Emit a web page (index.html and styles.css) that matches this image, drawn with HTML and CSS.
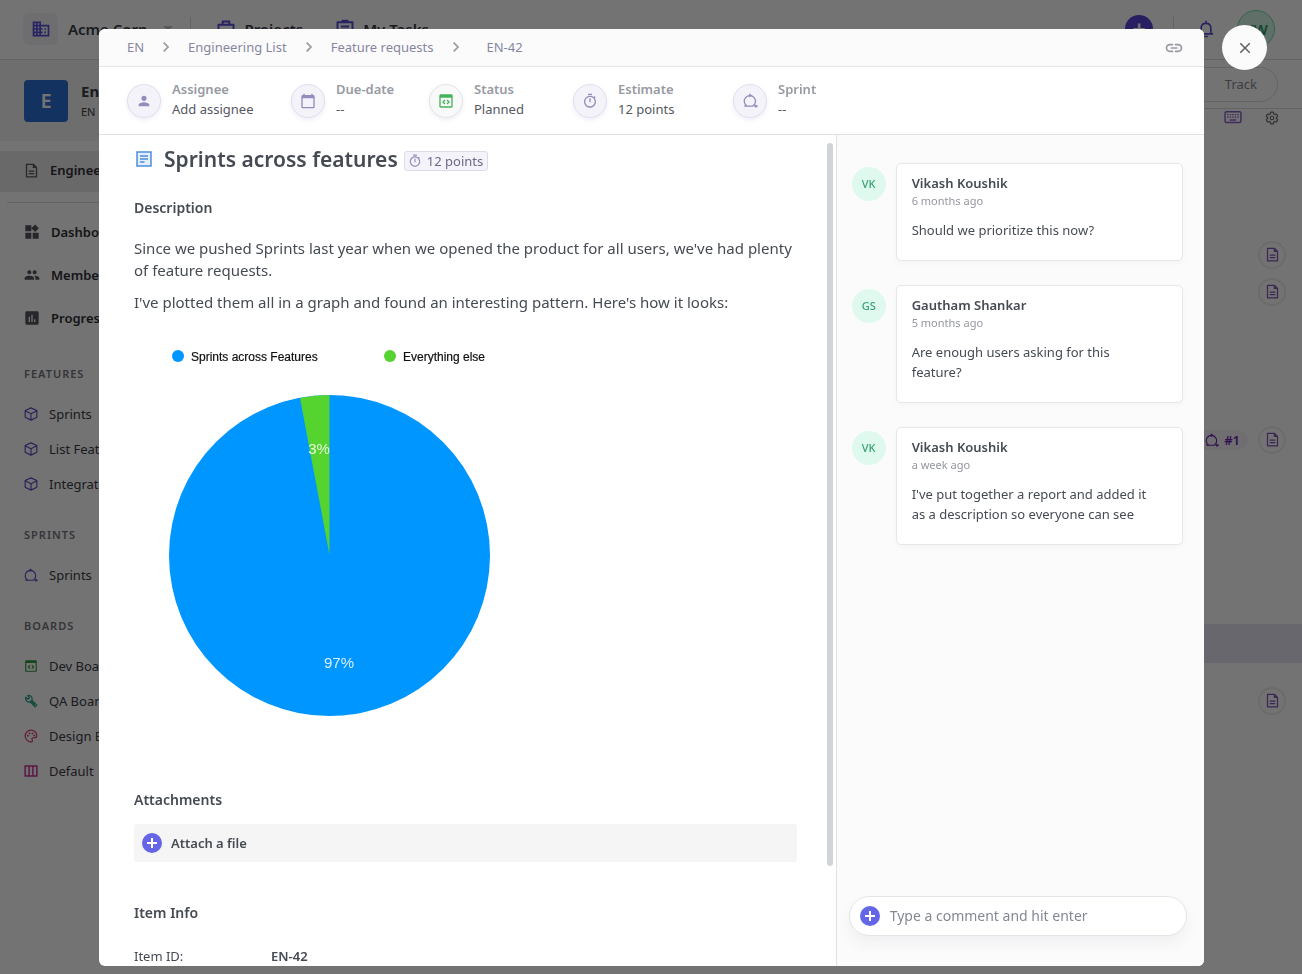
FILE: index.html
```html
<!DOCTYPE html>
<html lang="en">
<head>
<meta charset="utf-8">
<meta name="viewport" content="width=device-width, initial-scale=1">
<title>Sprints across features</title>
<link rel="stylesheet" href="styles.css">
</head>
<body>
<svg class="sprite" aria-hidden="true">
  <symbol id="i-building" viewBox="0 0 24 24"><path d="M12 7V3H2v18h20V7H12zM6 19H4v-2h2v2zm0-4H4v-2h2v2zm0-4H4V9h2v2zm0-4H4V5h2v2zm4 12H8v-2h2v2zm0-4H8v-2h2v2zm0-4H8V9h2v2zm0-4H8V5h2v2zm10 12h-8v-2h2v-2h-2v-2h2v-2h-2V9h8v10zm-2-8h-2v2h2v-2zm0 4h-2v2h2v-2z"/></symbol>
  <symbol id="i-person" viewBox="0 0 24 24"><path d="M12 12c2.21 0 4-1.79 4-4s-1.79-4-4-4-4 1.79-4 4 1.79 4 4 4zm0 2c-2.67 0-8 1.34-8 4v2h16v-2c0-2.66-5.33-4-8-4z"/></symbol>
  <symbol id="i-calendar" viewBox="0 0 24 24"><path d="M20 3h-1V1h-2v2H7V1H5v2H4c-1.1 0-2 .9-2 2v16c0 1.1.9 2 2 2h16c1.1 0 2-.9 2-2V5c0-1.1-.9-2-2-2zm0 18H4V8h16v13z"/></symbol>
  <symbol id="i-timer" viewBox="0 0 24 24"><path d="M15 1H9v2h6V1zm-4 13h2V8h-2v6zm8.03-6.61l1.42-1.42c-.43-.51-.9-.99-1.41-1.41l-1.42 1.42C16.07 4.74 14.12 4 12 4c-4.97 0-9 4.03-9 9s4.02 9 9 9 9-4.03 9-9c0-2.12-.74-4.07-1.97-5.61zM12 20c-3.87 0-7-3.13-7-7s3.13-7 7-7 7 3.13 7 7-3.13 7-7 7z"/></symbol>
  <symbol id="i-code" viewBox="0 0 24 24"><path fill-rule="evenodd" d="M4 2h16a2 2 0 0 1 2 2v16a2 2 0 0 1-2 2H4a2 2 0 0 1-2-2V4a2 2 0 0 1 2-2zm0 5v13h16V7z"/><path fill="none" stroke="currentColor" stroke-width="2" d="M10.500 10.500l-3 3 3 3M13.500 10.500l3 3-3 3"/></symbol>
  <symbol id="i-sprint" viewBox="0 0 24 24"><path fill="none" stroke="currentColor" stroke-width="2" d="M2 21h14M6.500 21a9 9 0 1 1 9 0M18 21h5"/><path d="M10 .5l4.500 3.500-4.500 3zM19.500 18l4.500 3-4.500 3z"/></symbol>
  <symbol id="i-link" viewBox="0 0 24 24"><path d="M3.900 12c0-1.710 1.390-3.100 3.100-3.100h4V7H7c-2.760 0-5 2.240-5 5s2.240 5 5 5h4v-1.900H7c-1.710 0-3.100-1.390-3.100-3.100zM8 13h8v-2H8v2zm9-6h-4v1.900h4c1.710 0 3.100 1.390 3.100 3.100s-1.390 3.100-3.100 3.100h-4V17h4c2.760 0 5-2.240 5-5s-2.240-5-5-5z"/></symbol>
  <symbol id="i-chevron" viewBox="0 0 24 24"><path fill="none" stroke="currentColor" stroke-width="2.600" d="M8.500 5.500l6.500 6.500-6.500 6.500"/></symbol>
  <symbol id="i-close" viewBox="0 0 24 24"><path d="M19 6.410L17.590 5 12 10.590 6.410 5 5 6.410 10.590 12 5 17.590 6.410 19 12 13.410 17.590 19 19 17.590 13.410 12z"/></symbol>
  <symbol id="i-plus" viewBox="0 0 20 20"><circle cx="10" cy="10" r="10"/><path stroke="#fff" stroke-width="2" d="M10 5v10M5 10h10"/></symbol>
  <symbol id="i-doc" viewBox="0 0 24 24"><path fill="none" stroke="currentColor" stroke-width="2" stroke-linejoin="round" d="M4 2h11l5 5v15H4z"/><path d="M14 2v6h6zM7.500 12h9v1.800h-9zM7.500 16h9v1.800h-9z"/></symbol>
  <symbol id="i-article" viewBox="0 0 16 16"><rect x="1" y="1" width="14" height="14" fill="#e3effc" stroke="currentColor" stroke-width="1.500"/><path stroke="currentColor" stroke-width="1.400" d="M4 5h8M4 8h8M4 11h4.500"/></symbol>
  <symbol id="i-widgets" viewBox="0 0 24 24"><path d="M13 13v9h9v-9h-9zM2 22h9v-9H2v9zM2 2v9h9V2H2zm14.660-1.310L11 6.340 16.660 12l5.660-5.660-5.660-5.650z"/></symbol>
  <symbol id="i-people" viewBox="0 0 24 24"><path d="M16 11c1.660 0 2.990-1.340 2.990-3S17.660 5 16 5c-1.660 0-3 1.340-3 3s1.340 3 3 3zm-8 0c1.660 0 2.990-1.340 2.990-3S9.660 5 8 5C6.340 5 5 6.340 5 8s1.340 3 3 3zm0 2c-2.330 0-7 1.170-7 3.500V19h14v-2.500c0-2.330-4.670-3.500-7-3.500zm8 0c-.29 0-.62.02-.97.05 1.160.84 1.970 1.970 1.970 3.450V19h6v-2.500c0-2.330-4.670-3.500-7-3.500z"/></symbol>
  <symbol id="i-chart" viewBox="0 0 24 24"><path d="M20 2H4c-1.100 0-2 .9-2 2v16c0 1.100.9 2 2 2h16c1.100 0 2-.9 2-2V4c0-1.100-.9-2-2-2zM9 18H7v-8h2v8zm4 0h-2V7h2v11zm4 0h-2v-4h2v4z"/></symbol>
  <symbol id="i-cube" viewBox="0 0 24 24"><path fill="none" stroke="currentColor" stroke-width="2" stroke-linejoin="round" d="M12 1.500l10 4.500v11.500l-10 5-10-5V6zM2 6.500l10 5 10-5M12 11.500V22"/></symbol>
  <symbol id="i-wrench" viewBox="0 0 24 24"><path fill="none" stroke="currentColor" stroke-width="2" stroke-linejoin="round" d="M3 5.500l3.500 3.500 3-3L6 2.500c3-1.200 8 .5 8 5.500 0 1-.2 2-.5 2.500l8.500 8.500-3 3-8.500-8.500c-5 1.500-9.500-3-7.500-8zM11 11l7.500 7.500"/></symbol>
  <symbol id="i-palette" viewBox="0 0 24 24"><path fill="none" stroke="currentColor" stroke-width="2" d="M12 2a10 10 0 0 0 0 20c2.500 0 3-1.800 2-3.500-1-1.800 0-3.500 2-3.500h2c2.500 0 4-1.500 4-4 0-5-4.500-9-10-9z"/><circle cx="6.500" cy="11.500" r="1.600"/><circle cx="9.500" cy="7.500" r="1.600"/><circle cx="14.500" cy="7.500" r="1.600"/><circle cx="17.500" cy="11" r="1.600"/></symbol>
  <symbol id="i-columns" viewBox="0 0 24 24"><path fill="none" stroke="currentColor" stroke-width="2.600" d="M2 3.500h20v17H2zM8.700 3v18M15.300 3v18"/></symbol>
  <symbol id="i-case" viewBox="0 0 24 24"><path fill="none" stroke="currentColor" stroke-width="2.400" stroke-linejoin="round" d="M3 7h18v14H3zM8 7V3h8v4"/></symbol>
  <symbol id="i-tasks" viewBox="0 0 24 24"><path fill="none" stroke="currentColor" stroke-width="2.400" stroke-linejoin="round" d="M3 4h18v17H3zM7 9h10M7 13h10M9 4V2h6v2"/></symbol>
  <symbol id="i-bell" viewBox="0 0 24 24"><path fill="none" stroke="currentColor" stroke-width="2.200" stroke-linejoin="round" d="M2.500 18.500h19M5.500 18v-7c0-4 2.500-6.500 6.500-6.500s6.500 2.500 6.500 6.500v7M12 4V1M9.500 22h5"/></symbol>
  <symbol id="i-keyboard" viewBox="0 0 24 18"><rect x="1" y="1" width="22" height="15" rx="2" fill="none" stroke="currentColor" stroke-width="2"/><path stroke="currentColor" stroke-width="2" stroke-dasharray="2 1.500" d="M4 5h16M4 8.500h16"/><path stroke="currentColor" stroke-width="2" d="M7.500 12.500h9"/></symbol>
  <symbol id="i-gear" viewBox="0 0 24 24"><path fill="none" stroke="currentColor" stroke-width="2" d="M19.430 12.980c.04-.32.07-.64.07-.98s-.03-.66-.07-.98l2.110-1.650c.19-.15.24-.42.12-.64l-2-3.460c-.12-.22-.39-.3-.61-.22l-2.490 1c-.52-.4-1.080-.73-1.690-.98l-.38-2.650C14.460 2.180 14.250 2 14 2h-4c-.25 0-.46.18-.49.42l-.38 2.650c-.61.25-1.170.59-1.690.98l-2.490-1c-.23-.09-.49 0-.61.22l-2 3.460c-.13.22-.07.49.12.64l2.110 1.650c-.04.32-.07.65-.07.98s.03.66.07.98l-2.110 1.650c-.19.15-.24.42-.12.64l2 3.460c.12.22.39.3.61.22l2.490-1c.52.4 1.080.73 1.690.98l.38 2.650c.03.24.24.42.49.42h4c.25 0 .46-.18.49-.42l.38-2.650c.61-.25 1.170-.59 1.690-.98l2.490 1c.23.09.49 0 .61-.22l2-3.460c.12-.22.07-.49-.12-.64z"/><circle cx="12" cy="12" r="3" fill="none" stroke="currentColor" stroke-width="2"/></symbol>
</svg>

<div class="app" inert>
  <header class="topbar">
    <span class="org-icon"><svg class="icon s20"><use href="#i-building"/></svg></span>
    <span class="org-name">Acme Corp</span>
    <span class="caret"></span>
    <span class="rule"></span>
    <a class="top-link projects" href="#"><svg class="icon s20"><use href="#i-case"/></svg>Projects</a>
    <a class="top-link" href="#"><svg class="icon s20"><use href="#i-tasks"/></svg>My Tasks</a>
    <span class="spacer"></span>
    <button class="add" type="button" aria-label="Create">+</button>
    <span class="rule"></span>
    <button class="bell" type="button" aria-label="Notifications"><svg class="icon s18"><use href="#i-bell"/></svg></button>
    <span class="me">VW</span>
  </header>
  <div class="workspace">
    <nav class="sidebar">
      <div class="project">
        <span class="project-tile">E</span>
        <div><div class="project-name">Engineering</div><div class="project-key">EN</div></div>
      </div>
      <a class="nav-main selected" href="#"><svg class="icon s15"><use href="#i-doc"/></svg>Engineering List</a>
      <div class="nav-group">
        <a class="nav-main" href="#"><svg class="icon s16"><use href="#i-widgets"/></svg>Dashboard</a>
        <a class="nav-main" href="#"><svg class="icon s16"><use href="#i-people"/></svg>Members</a>
        <a class="nav-main" href="#"><svg class="icon s16"><use href="#i-chart"/></svg>Progress</a>
      </div>
      <h3 class="nav-title">FEATURES</h3>
      <a class="nav-item indigo" href="#"><svg class="icon s14"><use href="#i-cube"/></svg>Sprints</a>
      <a class="nav-item indigo" href="#"><svg class="icon s14"><use href="#i-cube"/></svg>List Features</a>
      <a class="nav-item indigo" href="#"><svg class="icon s14"><use href="#i-cube"/></svg>Integrations</a>
      <h3 class="nav-title">SPRINTS</h3>
      <a class="nav-item indigo" href="#"><svg class="icon s14"><use href="#i-sprint"/></svg>Sprints</a>
      <h3 class="nav-title">BOARDS</h3>
      <a class="nav-item green" href="#"><svg class="icon s14"><use href="#i-code"/></svg>Dev Board</a>
      <a class="nav-item teal" href="#"><svg class="icon s14"><use href="#i-wrench"/></svg>QA Board</a>
      <a class="nav-item rose" href="#"><svg class="icon s14"><use href="#i-palette"/></svg>Design Board</a>
      <a class="nav-item pink" href="#"><svg class="icon s14"><use href="#i-columns"/></svg>Default</a>
    </nav>
    <main class="list">
      <div class="list-tabs"><button class="track" type="button">Track</button></div>
      <div class="list-tools"><svg class="icon keyboard"><use href="#i-keyboard"/></svg><svg class="icon s14 gear"><use href="#i-gear"/></svg></div>
      <div class="rows">
        <div class="row"></div><div class="row"></div><div class="row"></div>
        <div class="row"><span class="note"><svg class="icon s15"><use href="#i-doc"/></svg></span></div>
        <div class="row"><span class="note"><svg class="icon s15"><use href="#i-doc"/></svg></span></div>
        <div class="row"></div><div class="row"></div><div class="row"></div>
        <div class="row"><span class="tag"><svg class="icon s14"><use href="#i-sprint"/></svg>#1</span><span class="note"><svg class="icon s15"><use href="#i-doc"/></svg></span></div>
        <div class="row"></div><div class="row"></div><div class="row"></div><div class="row"></div>
        <div class="row heading"></div>
        <div class="row"><span class="note"><svg class="icon s15"><use href="#i-doc"/></svg></span></div>
      </div>
    </main>
  </div>
</div>

<div class="overlay">
  <section class="modal" role="dialog" aria-modal="true" aria-labelledby="item-title">
    <button class="close" type="button" aria-label="Close"><svg class="icon s18"><use href="#i-close"/></svg></button>
    <header class="crumb-bar">
      <nav class="crumbs" aria-label="Breadcrumb">
        <a href="#">EN</a><svg class="icon s16"><use href="#i-chevron"/></svg>
        <a href="#">Engineering List</a><svg class="icon s16"><use href="#i-chevron"/></svg>
        <a href="#">Feature requests</a><svg class="icon s16"><use href="#i-chevron"/></svg>
        <a class="current" href="#">EN-42</a>
      </nav>
      <button class="copy" type="button" aria-label="Copy link"><svg class="icon s20"><use href="#i-link"/></svg></button>
    </header>
    <div class="fields">
      <button class="field" type="button"><span class="bubble"><svg class="icon s16"><use href="#i-person"/></svg></span><span class="field-text"><span class="label">Assignee</span><span class="value">Add assignee</span></span></button>
      <button class="field" type="button"><span class="bubble"><svg class="icon s16"><use href="#i-calendar"/></svg></span><span class="field-text"><span class="label">Due-date</span><span class="value">--</span></span></button>
      <button class="field" type="button"><span class="bubble status"><svg class="icon s16"><use href="#i-code"/></svg></span><span class="field-text"><span class="label">Status</span><span class="value">Planned</span></span></button>
      <button class="field" type="button"><span class="bubble"><svg class="icon s16"><use href="#i-timer"/></svg></span><span class="field-text"><span class="label">Estimate</span><span class="value">12 points</span></span></button>
      <button class="field" type="button"><span class="bubble"><svg class="icon s15"><use href="#i-sprint"/></svg></span><span class="field-text"><span class="label">Sprint</span><span class="value">--</span></span></button>
    </div>
    <div class="body">
      <div class="details">
        <div class="title-row">
          <svg class="icon article"><use href="#i-article"/></svg>
          <h1 class="title" id="item-title">Sprints across features</h1>
          <span class="points"><svg class="icon s14"><use href="#i-timer"/></svg>12 points</span>
        </div>
        <h2 class="section-title">Description</h2>
        <div class="description">
          <p>Since we pushed Sprints last year when we opened the product for all users, we've had plenty of feature requests.</p>
          <p>I've plotted them all in a graph and found an interesting pattern. Here's how it looks:</p>
        </div>
        <svg class="pie" viewBox="0 0 358 382" role="img" aria-label="Share of feature requests">
          <circle cx="44" cy="16" r="6" fill="#0096ff"/><text class="legend" x="57" y="21">Sprints across Features</text>
          <circle cx="256" cy="16" r="6" fill="#55d32f"/><text class="legend" x="269" y="21">Everything else</text>
          <circle cx="195.500" cy="215.500" r="160.500" fill="#0096ff"/>
          <path d="M195.500 215V55A160.500 160.500 0 0 0 166 58z" fill="#55d32f"/>
          <text class="share" x="185" y="114">3%</text>
          <text class="share" x="205" y="328">97%</text>
        </svg>
        <h2 class="section-title attachments">Attachments</h2>
        <button class="attach" type="button"><svg class="icon s20 plus"><use href="#i-plus"/></svg>Attach a file</button>
        <h2 class="section-title">Item Info</h2>
        <dl class="info"><dt>Item ID:</dt><dd>EN-42</dd></dl>
        <span class="thumb"></span>
      </div>
      <aside class="comments">
        <article class="comment"><span class="avatar">VK</span><div class="card"><h3 class="author">Vikash Koushik</h3><time class="when">6 months ago</time><p class="message">Should we prioritize this now?</p></div></article>
        <article class="comment"><span class="avatar">GS</span><div class="card"><h3 class="author">Gautham Shankar</h3><time class="when">5 months ago</time><p class="message">Are enough users asking for this feature?</p></div></article>
        <article class="comment"><span class="avatar">VK</span><div class="card"><h3 class="author">Vikash Koushik</h3><time class="when">a week ago</time><p class="message">I've put together a report and added it as a description so everyone can see</p></div></article>
        <form class="composer">
          <svg class="icon s20 plus"><use href="#i-plus"/></svg>
          <input type="text" placeholder="Type a comment and hit enter" aria-label="Comment">
        </form>
      </aside>
    </div>
  </section>
</div>
</body>
</html>
```
FILE: styles.css
```css
* { box-sizing: border-box; }
html, body { height: 100%; margin: 0; }
body { font: 13px/20px "Noto Sans", "Open Sans", sans-serif; color: #454a53; overflow: hidden; }
h1, h2, h3, p, dl, dd { margin: 0; }
a { color: inherit; text-decoration: none; }
button { font: inherit; color: inherit; background: none; border: 0; padding: 0; text-align: left; }

.sprite { position: absolute; width: 0; height: 0; }
.icon { flex: none; fill: currentColor; display: block; }
.s14 { width: 14px; height: 14px; }
.s15 { width: 15px; height: 15px; }
.s16 { width: 16px; height: 16px; }
.s18 { width: 18px; height: 18px; }
.s20 { width: 20px; height: 20px; }

/* Application behind the dialog */
.app { height: 100%; display: flex; flex-direction: column; background: #fff; color: #3c3c48; overflow: hidden; }
.topbar { flex: none; display: flex; align-items: center; height: 60px; padding: 0 27px 2px 23px; border-bottom: 1px solid #dcdce0; font-size: 15px; font-weight: 600; }
.org-icon { display: grid; place-items: center; width: 35px; height: 32px; margin-right: 10px; border-radius: 6px; background: #f4f4fa; color: #5a50d8; }
.caret { margin: 0 17px 0 16px; border: 5px solid transparent; border-top-color: #c4c4d0; border-bottom: 0; }
.rule { width: 1px; height: 24px; background: #dcdce0; }
.top-link { display: flex; align-items: center; gap: 8px; margin-left: 25px; }
.top-link + .top-link { margin-left: 32px; }
.top-link .icon { color: #5a50d8; }
.spacer { flex: 1; }
.add { width: 28px; height: 28px; margin-right: 20px; border-radius: 50%; background: #5a46dc; color: #fff; font-size: 24px; text-align: center; }
.bell { margin: 0 22px 0 23px; color: #5a50d8; }
.me { display: grid; place-items: center; width: 38px; height: 38px; border: 1px solid #6fdcae; border-radius: 50%; background: #d4f5e6; color: #2a9d6e; }

.workspace { flex: 1; display: flex; min-height: 0; }
.sidebar { flex: none; width: 240px; }
.project { display: flex; align-items: center; gap: 13px; height: 81px; padding: 0 24px; background: #f3f3f3; }
.project-tile { display: grid; place-items: center; width: 44px; height: 42px; border-radius: 4px; background: #2a6fd6; color: #fff; font-size: 20px; font-weight: 600; }
.project-name { font-size: 15px; font-weight: 700; line-height: 22px; }
.project-key { font-size: 11px; }
.nav-main { display: flex; align-items: center; gap: 11px; height: 43px; padding: 0 24px; font-weight: 600; color: #303038; }
.nav-main .icon { color: #55555f; }
.selected { height: 41px; margin-top: 10px; padding-bottom: 3px; background: #e8e8e8; }
.nav-group { margin: 10px 0 25px 7px; padding-top: 7px; border-top: 1px solid #dcdcdc; }
.nav-group .nav-main { padding-left: 17px; }
.nav-title { margin: 24px 24px 12px; font-size: 11px; line-height: 20px; font-weight: 600; color: #77777f; letter-spacing: 1px; }
.nav-item { display: flex; align-items: center; gap: 11px; height: 35px; padding: 0 24px; }
.indigo .icon { color: #5a50c8; }
.green .icon { color: #2f9a3c; }
.teal .icon { color: #20a080; }
.rose .icon { color: #d83868; }
.pink .icon { color: #d0309a; }

.list { flex: 1; display: flex; flex-direction: column; }
.list-tabs { display: flex; flex: none; justify-content: flex-end; align-items: center; height: 49px; padding: 0 24px; border-bottom: 1px solid #dcdce0; }
.track { height: 35px; width: 90px; padding: 0 20px; border: 1px solid #dcdce0; border-radius: 18px; color: #8a8a92; text-align: right; }
.list-tools { display: flex; flex: none; justify-content: flex-end; align-items: center; gap: 23px; height: 16px; padding: 1px 23px 0 0; }
.keyboard { width: 18px; height: 13px; color: #8a60c8; }
.gear { color: #707078; }
.rows { display: flex; flex-direction: column; }
.row { display: flex; flex: none; align-items: center; justify-content: flex-end; gap: 10px; height: 37px; padding-right: 16px; }
.heading { height: 39px; margin: 18px 0 19px; background: #e6e4f2; }
.note { display: grid; place-items: center; width: 28px; height: 28px; border-radius: 50%; border: 2px solid #eeeeef; color: #8058b8; }
.tag { display: flex; align-items: center; gap: 5px; height: 20px; padding: 0 8px; border-radius: 10px; background: #faf4fb; color: #6a1fb0; font-weight: 600; }

/* Dialog */
.overlay { position: fixed; inset: 0; padding: 29px 98px 8px 99px; background: rgba(0, 0, 0, .55); }
.modal { position: relative; display: flex; flex-direction: column; height: 100%; border-radius: 6px; background: #fff; }
.close { position: absolute; top: -4px; right: -63px; display: grid; place-items: center; width: 45px; height: 45px; border-radius: 50%; background: #fbfbfb; color: #606060; }
.crumb-bar { flex: none; display: flex; align-items: center; justify-content: space-between; height: 38px; padding: 0 20px 0 28px; border-bottom: 1px solid #e6e6e8; border-radius: 6px 6px 0 0; background: #fbfbfb; }
.crumbs { display: flex; align-items: center; gap: 14px; padding-bottom: 1px; color: #8786a0; }
.crumbs .icon { color: #9a9aa4; }
.current { margin-left: 9px; }
.copy { color: #9799a2; }

.fields { flex: none; display: grid; grid-template-columns: 164px 138px 144px 160px 1fr; align-items: center; height: 68px; padding: 0 28px; border-bottom: 1px solid #e2e2e5; }
.field { display: flex; align-items: center; gap: 11px; }
.bubble { display: grid; place-items: center; width: 34px; height: 34px; border: 1px solid #e2deef; border-radius: 50%; background: #f4f3f9; color: #958bbf; box-shadow: 0 2px 4px rgba(120, 110, 190, .12); }
.status { background: #f9f9f9; border-color: #e3e5e6; color: #45b35a; }
.field-text { display: flex; flex-direction: column; padding-bottom: 4px; }
.label { font-weight: 600; color: #979aa2; }
.value { color: #55585f; }

.body { flex: 1; display: flex; min-height: 0; }
.details { position: relative; flex: 2; padding: 10px 39px 0 35px; overflow: hidden; border-radius: 0 0 0 6px; }
.thumb { position: absolute; top: 8px; right: 3px; width: 6px; height: 87%; border-radius: 3px; background: #d0d3d8; }
.title-row { display: flex; align-items: center; height: 28px; }
.article { width: 16px; height: 16px; margin: 0 12px 0 2px; color: #4f8ee0; }
.title { font-size: 21px; line-height: 28px; font-weight: 600; }
.points { display: flex; align-items: center; gap: 5px; height: 20px; margin: 4px 0 0 6px; padding: 0 4px 0 3px; border: 1px solid #dedaec; border-radius: 3px; background: #f4f3f9; color: #6d6886; }
.points .icon { color: #958bbf; }
.section-title { margin-top: 25px; font-size: 14px; line-height: 20px; font-weight: 600; }
.description { margin-top: 19px; font-size: 15px; line-height: 22px; }
.description p { margin-bottom: 10px; }
.pie { display: block; width: 358px; height: 382px; margin-top: 27px; }
.legend { font: 12px "Liberation Sans", Arial, sans-serif; fill: #111; stroke: #111; stroke-width: .2px; }
.share { font: 15px "Liberation Sans", Arial, sans-serif; fill: #fff; fill-opacity: .85; text-anchor: middle; }
.attachments { margin-top: 68px; }
.attach { display: flex; align-items: center; gap: 9px; width: 100%; height: 38px; margin: 14px 0 41px; padding: 0 8px; border-radius: 3px; background: #f5f5f5; font-weight: 600; }
.plus { color: #6565e8; }
.info { display: grid; grid-template-columns: 137px 1fr; margin-top: 23px; }
.info dd { font-weight: 600; }

.comments { flex: 1; display: flex; flex-direction: column; gap: 24px; padding: 28px 21px 30px 15px; border-left: 1px solid #e2e2e5; border-radius: 0 0 6px; background: #fbfbfb; }
.comment { display: flex; gap: 10px; }
.avatar { flex: none; display: grid; place-items: center; width: 34px; height: 34px; margin-top: 4px; border-radius: 50%; background: #e0f9ee; color: #35a474; font-size: 11px; font-weight: 500; }
.card { flex: 1; padding: 9px 24px 20px 15px; border: 1px solid #e7e7ea; border-radius: 5px; background: #fff; box-shadow: 0 2px 6px rgba(0, 0, 0, .03); }
.author { font-size: 13px; line-height: 20px; font-weight: 600; }
.when { display: block; font-size: 11px; line-height: 16px; color: #9496a0; }
.message { margin-top: 11px; }
.composer { display: flex; align-items: center; gap: 10px; height: 40px; margin: auto -4px 0 -3px; padding: 0 10px; border: 1px solid #e4e4ea; border-radius: 20px; background: #fff; box-shadow: 0 8px 14px rgba(60, 60, 100, .06); }
.composer input { flex: 1; min-width: 0; padding: 0; border: 0; outline: 0; background: none; font: inherit; font-size: 14px; color: inherit; }
.composer input::placeholder { color: #858894; opacity: 1; }
```
